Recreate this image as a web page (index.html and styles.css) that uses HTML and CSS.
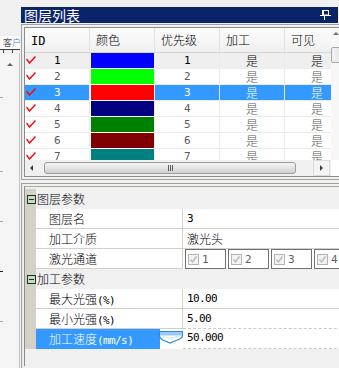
FILE: index.html
```html
<!DOCTYPE html>
<html>
<head>
<meta charset="utf-8">
<link rel="stylesheet" href="styles.css">
</head>
<body>
<div class="app">
  <div class="side">
    <div class="side-top"></div>
    <div class="side-tab"><span class="k">客</span><span class="h">户</span></div>
    <div class="side-ruler"><i></i><i></i></div>
    <div class="side-body"><span class="up-tri"></span></div>
  </div>
  <div class="main">
    <div class="titlebar">
      <span class="title">图层列表</span>
      <svg class="pin" width="11" height="10" viewBox="0 0 11 10">
        <rect x="2.5" y="0.5" width="6" height="4.5" fill="none" stroke="#fff" stroke-width="1"/>
        <rect x="2" y="0" width="2" height="5.5" fill="#fff"/>
        <rect x="0" y="5" width="11" height="1" fill="#fff"/>
        <rect x="4" y="6" width="1" height="4" fill="#fff"/>
      </svg>
    </div>
    <div class="frame">
      <div class="frame-in">
        <div class="gv">
          <div class="gv-top">
            <div class="gv-table">
              <div class="gv-head">
                <div class="c c1 hc"><span class="en">ID</span></div>
                <div class="c c2 hc">颜色</div>
                <div class="c c3 hc">优先级</div>
                <div class="c c4 hc">加工</div>
                <div class="c c5 hc">可见</div>
              </div>
              <div class="gv-row first">
                <div class="c c1"><svg class="chk" width="10" height="8" viewBox="0 0 10 8"><polyline points="0.5,3 3.5,7 9.5,0.5" fill="none" stroke="#f00" stroke-width="1.4"/></svg><span class="num en">1</span></div>
                <div class="c c2"><span class="sw" style="background:#0000ff"></span></div>
                <div class="c c3 mid en">1</div>
                <div class="c c4 mid">是</div>
                <div class="c c5 mid">是</div>
              </div>
              <div class="gv-row">
                <div class="c c1"><svg class="chk" width="10" height="8" viewBox="0 0 10 8"><polyline points="0.5,3 3.5,7 9.5,0.5" fill="none" stroke="#f00" stroke-width="1.4"/></svg><span class="num en">2</span></div>
                <div class="c c2"><span class="sw" style="background:#00ff00"></span></div>
                <div class="c c3 mid en">2</div>
                <div class="c c4 mid">是</div>
                <div class="c c5 mid">是</div>
              </div>
              <div class="gv-row sel">
                <div class="c c1"><svg class="chk" width="10" height="8" viewBox="0 0 10 8"><polyline points="0.5,3 3.5,7 9.5,0.5" fill="none" stroke="#f00" stroke-width="1.4"/></svg><span class="num en">3</span></div>
                <div class="c c2"><span class="sw" style="background:#ff0000"></span></div>
                <div class="c c3 mid en">3</div>
                <div class="c c4 mid">是</div>
                <div class="c c5 mid">是</div>
              </div>
              <div class="gv-row">
                <div class="c c1"><svg class="chk" width="10" height="8" viewBox="0 0 10 8"><polyline points="0.5,3 3.5,7 9.5,0.5" fill="none" stroke="#f00" stroke-width="1.4"/></svg><span class="num en">4</span></div>
                <div class="c c2"><span class="sw" style="background:#000080"></span></div>
                <div class="c c3 mid en">4</div>
                <div class="c c4 mid">是</div>
                <div class="c c5 mid">是</div>
              </div>
              <div class="gv-row">
                <div class="c c1"><svg class="chk" width="10" height="8" viewBox="0 0 10 8"><polyline points="0.5,3 3.5,7 9.5,0.5" fill="none" stroke="#f00" stroke-width="1.4"/></svg><span class="num en">5</span></div>
                <div class="c c2"><span class="sw" style="background:#008000"></span></div>
                <div class="c c3 mid en">5</div>
                <div class="c c4 mid">是</div>
                <div class="c c5 mid">是</div>
              </div>
              <div class="gv-row">
                <div class="c c1"><svg class="chk" width="10" height="8" viewBox="0 0 10 8"><polyline points="0.5,3 3.5,7 9.5,0.5" fill="none" stroke="#f00" stroke-width="1.4"/></svg><span class="num en">6</span></div>
                <div class="c c2"><span class="sw" style="background:#800000"></span></div>
                <div class="c c3 mid en">6</div>
                <div class="c c4 mid">是</div>
                <div class="c c5 mid">是</div>
              </div>
              <div class="gv-row">
                <div class="c c1"><svg class="chk" width="10" height="8" viewBox="0 0 10 8"><polyline points="0.5,3 3.5,7 9.5,0.5" fill="none" stroke="#f00" stroke-width="1.4"/></svg><span class="num en">7</span></div>
                <div class="c c2"><span class="sw" style="background:#008080"></span></div>
                <div class="c c3 mid en">7</div>
                <div class="c c4 mid">是</div>
                <div class="c c5 mid">是</div>
              </div>
            </div>
            <div class="vscroll">
              <span class="vs-arrow"></span>
              <span class="vs-thumb"></span>
            </div>
          </div>
          <div class="hscroll">
            <span class="hs-btn"><span class="tri-l"></span></span>
            <span class="hs-thumb"><span class="grip"><i></i><i></i><i></i></span></span>
            <span class="hs-btn right"><span class="tri-r"></span></span>
          </div>
        </div>
      </div>
    </div>
    <div class="frame pframe">
      <div class="frame-in pg">
        <div class="cat">
          <div class="gut"><span class="tog"></span></div>
          <div class="cat-label">图层参数</div>
        </div>
        <div class="prow">
          <div class="gut"></div>
          <div class="pname">图层名</div>
          <div class="pval en">3</div>
        </div>
        <div class="prow">
          <div class="gut"></div>
          <div class="pname">加工介质</div>
          <div class="pval">激光头</div>
        </div>
        <div class="prow">
          <div class="gut"></div>
          <div class="pname">激光通道</div>
          <div class="pval chans">
            <span class="chan"><span class="cb"><svg width="9" height="9" viewBox="0 0 9 9"><polyline points="1.5,4.5 3.5,7 7.5,1.5" fill="none" stroke="#b8b8b8" stroke-width="1.3"/></svg></span><span class="en">1</span></span>
            <span class="chan"><span class="cb"><svg width="9" height="9" viewBox="0 0 9 9"><polyline points="1.5,4.5 3.5,7 7.5,1.5" fill="none" stroke="#b8b8b8" stroke-width="1.3"/></svg></span><span class="en">2</span></span>
            <span class="chan"><span class="cb"><svg width="9" height="9" viewBox="0 0 9 9"><polyline points="1.5,4.5 3.5,7 7.5,1.5" fill="none" stroke="#b8b8b8" stroke-width="1.3"/></svg></span><span class="en">3</span></span>
            <span class="chan"><span class="cb"><svg width="9" height="9" viewBox="0 0 9 9"><polyline points="1.5,4.5 3.5,7 7.5,1.5" fill="none" stroke="#b8b8b8" stroke-width="1.3"/></svg></span><span class="en">4</span></span>
          </div>
        </div>
        <div class="cat">
          <div class="gut"><span class="tog"></span></div>
          <div class="cat-label">加工参数</div>
        </div>
        <div class="prow">
          <div class="gut"></div>
          <div class="pname">最大光强<span class="en">(%)</span></div>
          <div class="pval en">10.00</div>
        </div>
        <div class="prow before-sel">
          <div class="gut"></div>
          <div class="pname">最小光强<span class="en">(%)</span></div>
          <div class="pval en">5.00</div>
        </div>
        <div class="prow selrow">
          <div class="gut"></div>
          <div class="pname"><span class="sel-label">加工速度<span class="en">(mm/s)</span></span>
            <svg class="spin" width="26" height="20" viewBox="0 0 26 20">
              <rect x="0" y="0" width="3" height="20" fill="#3399ff"/>
              <path d="M2.5 2.5 H25.5 V6.5 Q25.5 9.5 19 11.5 L13 14 L7 11.5 Q2.5 9.5 2.5 6.5 Z" fill="#fff" stroke="#2f88e0" stroke-width="1.2"/>
              <rect x="3" y="3" width="22" height="3.5" fill="#9ccaf6"/>
              <path d="M6 7.5 Q13 10.5 21 7.5" fill="none" stroke="#cfe5fb" stroke-width="1"/>
            </svg>
          </div>
          <div class="pval en">50.000</div>
        </div>
      </div>
    </div>
  </div>
</div>
</body>
</html>
```
FILE: styles.css
```css
html, body {
  margin: 0;
  padding: 0;
  overflow: hidden;
}
body {
  width: 339px;
  height: 368px;
  background: #f0f0f0;
  font-family: "Noto Sans CJK SC", "Noto Sans", sans-serif;
  font-size: 12px;
  font-weight: 300;
  color: #000;
}
.en {
  font-family: "DejaVu Sans Mono", "Liberation Mono", monospace;
  font-size: 11px;
  font-weight: 400;
  letter-spacing: -0.6px;
}
.app {
  display: flex;
  height: 368px;
}

/* left partially visible panel */
.side {
  width: 20px;
  flex: none;
  display: flex;
  flex-direction: column;
}
.side-top { height: 36px; }
.side-tab {
  height: 13px;
  background: #fafafa;
  font-size: 9px;
  line-height: 13px;
  padding-left: 3px;
  white-space: nowrap;
  overflow: hidden;
}
.side-tab .h { color: #4a7fc0; }
.side-ruler {
  height: 3px;
  border-top: 1px solid #404040;
  display: flex;
  gap: 8px;
  padding-left: 3px;
}
.side-ruler i {
  width: 1px;
  height: 3px;
  background: #404040;
}
.side-body {
  flex: 1;
  border-right: 1px solid #c4c4c4;
  background-color: #f5f5f5;
  background-image:
    linear-gradient(#a8a8a8, #a8a8a8),
    linear-gradient(#a8a8a8, #a8a8a8),
    linear-gradient(#a8a8a8, #a8a8a8),
    linear-gradient(#202020, #202020),
    linear-gradient(#a8a8a8, #a8a8a8);
  background-size: 3px 1px;
  background-repeat: no-repeat;
  background-position: 0 44px, 0 118px, 0 168px, 0 218px, 0 268px;
  display: flex;
  justify-content: center;
}
.up-tri {
  margin-top: 10px;
  width: 0;
  height: 0;
  border-left: 3px solid transparent;
  border-right: 3px solid transparent;
  border-bottom: 3px solid #606060;
}

/* main column */
.main {
  width: 318px;
  flex: none;
  display: flex;
  flex-direction: column;
}
.titlebar {
  margin: 7px 0 0 1px;
  height: 16px;
  background: #0a246a;
  color: #fff;
  display: flex;
  align-items: center;
  justify-content: space-between;
  padding-left: 3px;
  padding-right: 7px;
}
.title {
  font-size: 14px;
  font-weight: 400;
  line-height: 16px;
}
.pin { display: block; }

.frame {
  margin: 1px 0 0 1px;
  width: 340px;
  box-sizing: border-box;
  border: 1px solid #a0a0a0;
  padding: 2px;
  flex: none;
}
.frame-in {
  border: 1px solid #8c8c8c;
  background: #fff;
}

/* grid view */
.gv-top { display: flex; }
.gv-table {
  width: 306px;
  height: 132px;
  overflow: hidden;
  flex: none;
}
.gv-head, .gv-row {
  display: flex;
  width: 324px;
}
.gv-head {
  height: 24px;
  border-bottom: 1px solid #d5d5d5;
  background: linear-gradient(#fbfbfb, #f7f7f7 45%, #efefef);
}
.c {
  flex: none;
  box-sizing: border-box;
}
.c1 { width: 64px; }
.c2, .c3, .c4, .c5 { width: 65px; border-left: 1px solid #ebebeb; }
.hc {
  line-height: 24px;
  padding-left: 6px;
}
.gv-head .c2, .gv-head .c3, .gv-head .c4, .gv-head .c5 { border-left-color: #e2e2e2; }
.gv-head .c1 { padding-left: 6px; }
.gv-head .en { font-size: 12px; letter-spacing: 0; }

.gv-row {
  height: 16px;
  color: #5a5a5a;
  background: #fff;
}
.gv-row .c {
  height: 16px;
  line-height: 15px;
  border-bottom: 1px solid #ebebeb;
}
.gv-row.first { background: #efefef; color: #000; }
.gv-row.sel { background: #3399ff; color: #fff; }
.gv-row .c1 {
  display: grid;
}
.gv-row .c1 > * { grid-area: 1 / 1; }
.chk {
  justify-self: start;
  align-self: start;
  margin: 3px 0 0 1px;
}
.num { justify-self: center; }
.mid { text-align: center; }
.gv-row .c2 {
  background: #fff;
  border-bottom-color: #fff;
  padding-left: 1px;
}
.sw {
  display: block;
  width: 63px;
  height: 15px;
}

.vscroll {
  width: 17px;
  flex: none;
  height: 132px;
  background: #f7f7f7;
  display: flex;
  flex-direction: column;
  align-items: flex-start;
}
.vs-arrow {
  margin: 4px 0 0 2px;
  width: 0;
  height: 0;
  border-left: 3px solid transparent;
  border-right: 3px solid transparent;
  border-bottom: 3px solid #707070;
}
.vs-thumb {
  margin-top: 12px;
  width: 14px;
  height: 14px;
  border: 1px solid #a6a6a6;
  border-radius: 2px;
  background: linear-gradient(90deg, #f4f4f4, #dcdcdc);
}

.hscroll {
  width: 306px;
  height: 16px;
  background: #f0f0f0;
  display: flex;
  align-items: center;
}
.hs-btn {
  width: 17px;
  height: 14px;
  flex: none;
  display: flex;
  align-items: center;
  justify-content: center;
}
.hs-btn.right {
  margin-left: auto;
  width: 15px;
  border: 1px solid #dcdcdc;
  background: #f4f4f4;
  margin-right: 1px;
}
.tri-l {
  width: 0; height: 0;
  border-top: 3px solid transparent;
  border-bottom: 3px solid transparent;
  border-right: 3px solid #404040;
  margin-left: -4px;
}
.tri-r {
  width: 0; height: 0;
  border-top: 3px solid transparent;
  border-bottom: 3px solid transparent;
  border-left: 3px solid #404040;
}
.hs-thumb {
  margin-left: 2px;
  width: 252px;
  height: 12px;
  box-sizing: border-box;
  border: 1px solid #9c9c9c;
  border-radius: 3px;
  background: linear-gradient(#f6f6f6, #e4e4e4 50%, #cfcfcf);
  display: flex;
  align-items: center;
  justify-content: center;
}
.grip { display: flex; gap: 1px; }
.grip i {
  width: 1px;
  height: 6px;
  background: #5c5c5c;
}

/* property grid */
.pframe {
  margin-top: 3px;
  flex: 1;
  border-bottom: none;
}
.pg {
  height: 100%;
  box-sizing: border-box;
  border-top-color: #aca899;
  border-bottom: none;
  background: #f0f0f0;
  padding-top: 2px;
}
.cat {
  display: flex;
  height: 20px;
  align-items: center;
}
.gut {
  width: 11px;
  flex: none;
  align-self: stretch;
  background: #d4d0c8;
  display: flex;
  align-items: center;
}
.tog {
  margin-left: 2px;
  width: 7px;
  height: 7px;
  border: 1px solid #203020;
  background: #c4dcc4 linear-gradient(#203020, #203020) no-repeat center / 5px 1px;
}
.cat-label {
  margin-left: 1px;
  line-height: 20px;
}
.prow {
  display: flex;
  height: 20px;
}
.pname {
  width: 147px;
  flex: none;
  box-sizing: border-box;
  background: #fff;
  border-right: 1px solid #d4d0c8;
  border-bottom: 1px solid #d4d0c8;
  padding-left: 13px;
  line-height: 19px;
  white-space: nowrap;
}
.pval {
  flex: 1;
  background: #fff;
  border-bottom: 1px solid #d4d0c8;
  padding-left: 4px;
  line-height: 19px;
  white-space: nowrap;
}
.pval.en { font-size: 11px; }
.chans {
  display: flex;
  gap: 2px;
  padding-left: 2px;
  border-bottom: none;
}
.chan {
  width: 41px;
  height: 20px;
  flex: none;
  box-sizing: border-box;
  border: 1px solid #707070;
  display: flex;
  align-items: center;
  gap: 3px;
  padding-left: 2px;
  color: #606060;
  background: #fff;
}
.cb {
  width: 11px;
  height: 11px;
  box-sizing: border-box;
  border: 1px solid #b4b4b4;
  background: #f2f2f2;
  display: flex;
  align-items: center;
  justify-content: center;
}
.cb svg { display: block; }
.before-sel .pval { border-bottom: 1px dashed #cfcbc3; }
.selrow .pname {
  background: transparent;
  border: none;
  padding-left: 0;
  display: flex;
  height: 20px;
}
.sel-label {
  width: 121px;
  background: #3399ff;
  color: #fff;
  padding-left: 13px;
  box-sizing: border-box;
  line-height: 20px;
}
.spin { display: block; background: #fff; }
.selrow .pval {
  border-bottom: 1px dashed #cfcbc3;
  line-height: 18px;
}
```
